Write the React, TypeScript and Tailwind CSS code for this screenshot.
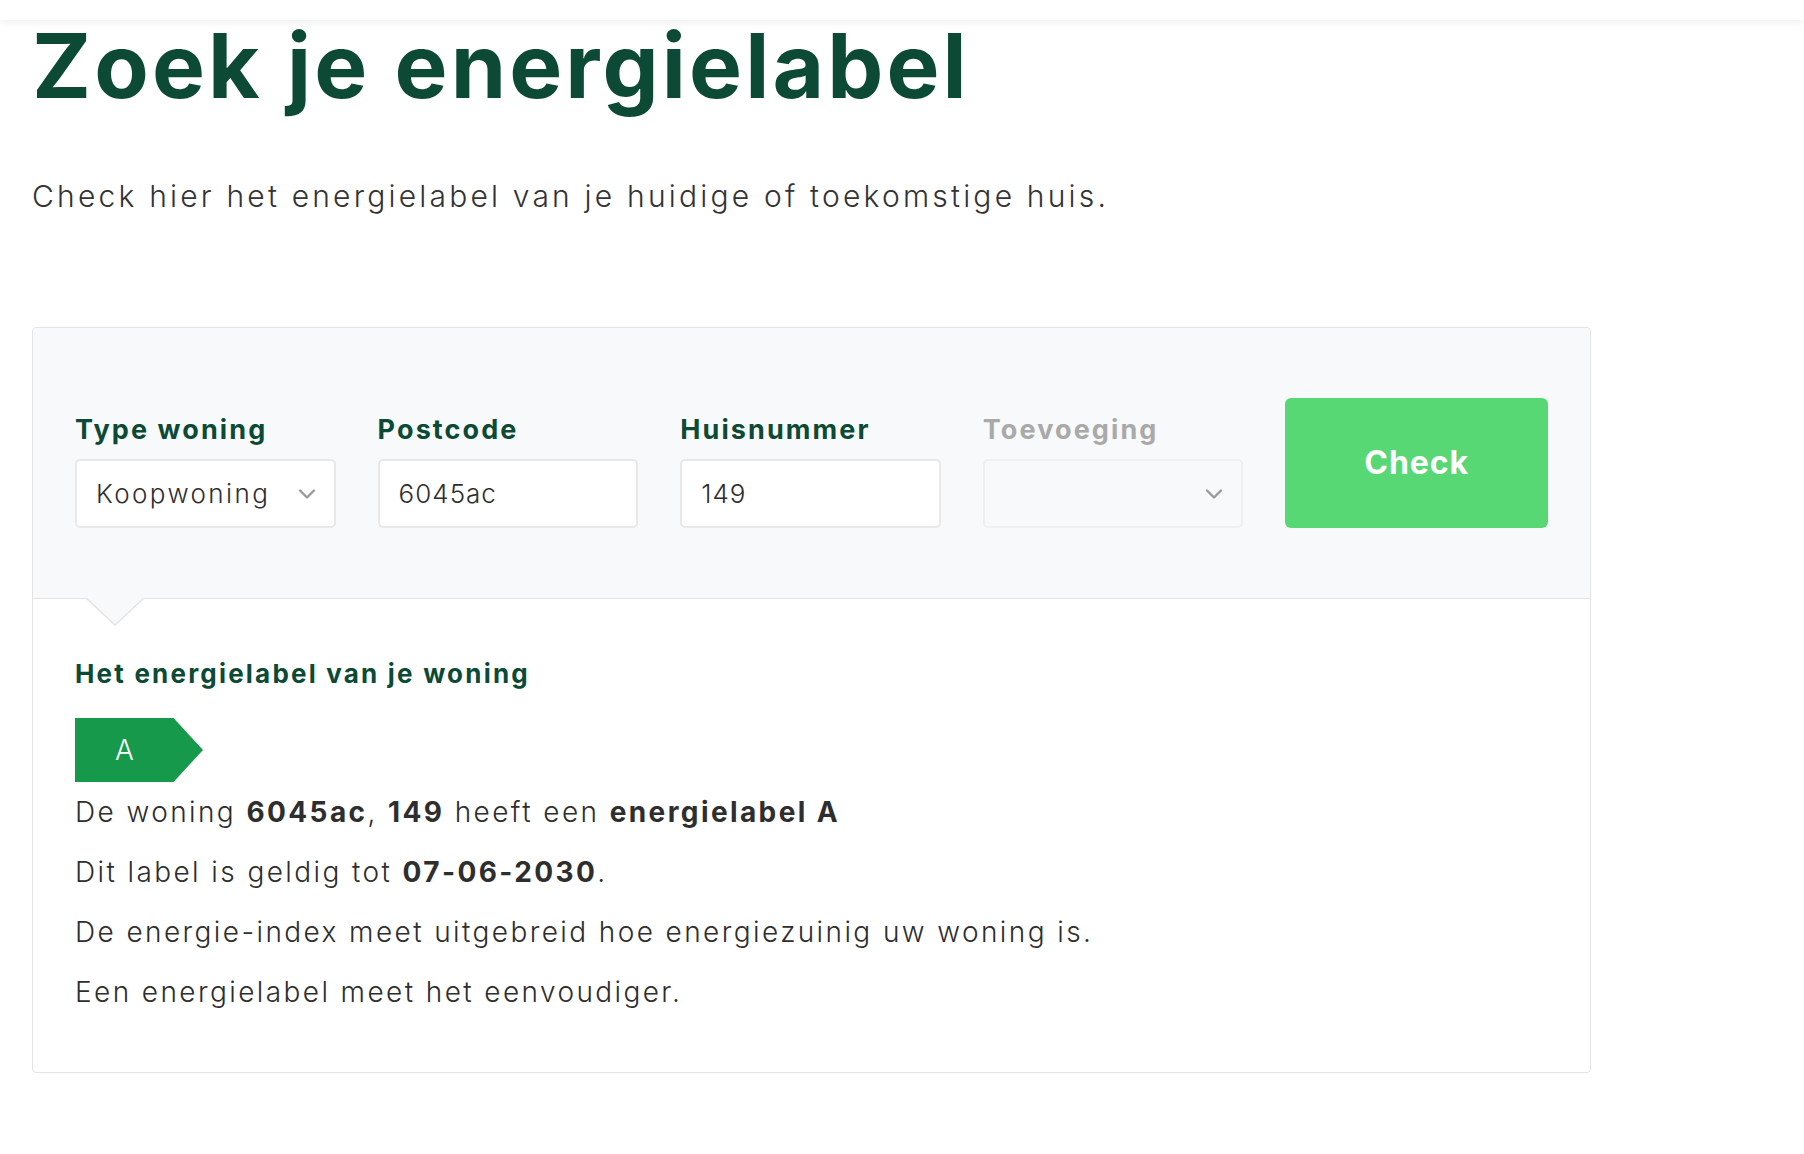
import React from "react";

function Chevron() {
  return (
    <svg width="18" height="10" viewBox="0 0 18 10" fill="none" className="shrink-0">
      <path d="M2 1.5l7 7 7-7" stroke="#9a9a9a" strokeWidth="2.4" strokeLinecap="round" strokeLinejoin="round" />
    </svg>
  );
}

interface FieldProps {
  label: string;
  disabled?: boolean;
  children: React.ReactNode;
}

function Field({ label, disabled, children }: FieldProps) {
  return (
    <div className="flex w-[262px] flex-col">
      <span
        className={`mb-[16px] text-[27px] font-bold leading-none tracking-[2.1px] ${
          disabled ? "text-[#a9a9a9]" : "text-[#0c4a36]"
        }`}
      >
        {label}
      </span>
      {children}
    </div>
  );
}

export default function App() {
  return (
    <div className="min-h-screen bg-white font-['Inter',sans-serif] text-[#2e2e2e]">
      {/* top bar */}
      <div className="h-[20px] bg-white shadow-[0_2px_8px_rgba(0,0,0,0.07)]" />

      <div className="pl-[32px]">
        <h1 className="mt-[1px] text-[89px] font-bold leading-none tracking-[0.035em] text-[#0c4a36]">
          Zoek je energielabel
        </h1>
        <p className="mt-[71px] text-[30px] font-light leading-none tracking-[3.2px] text-[#333]">
          Check hier het energielabel van je huidige of toekomstige huis.
        </p>

        {/* search card */}
        <div className="relative mt-[116px] w-[1559px] rounded-[4px] border border-[#e4e4e4]">
          <div className="flex items-end gap-[42px] rounded-t-[4px] border-b border-[#e4e4e4] bg-[#f8f9fa] px-[42px] py-[70px]">
            <Field label="Type woning">
              <div className="flex h-[69px] items-center justify-between rounded-[5px] border-2 border-[#e8e8e8] bg-white pl-[19px] pr-[18px]">
                <span className="text-[26px] font-light tracking-[2.4px]">Koopwoning</span>
                <Chevron />
              </div>
            </Field>
            <Field label="Postcode">
              <div className="flex h-[69px] items-center rounded-[5px] border-2 border-[#e8e8e8] bg-white pl-[19px]">
                <span className="text-[26px] font-light tracking-[1px]">6045ac</span>
              </div>
            </Field>
            <Field label="Huisnummer">
              <div className="flex h-[69px] items-center rounded-[5px] border-2 border-[#e8e8e8] bg-white pl-[19px]">
                <span className="text-[26px] font-light tracking-[1px]">149</span>
              </div>
            </Field>
            <Field label="Toevoeging" disabled>
              <div className="flex h-[69px] items-center justify-end rounded-[5px] border-2 border-[#efefef] bg-[#f8f9fa] pr-[18px]">
                <Chevron />
              </div>
            </Field>
            <button className="flex h-[130px] w-[264px] items-center justify-center rounded-[6px] bg-[#58d775] text-[32px] font-bold tracking-[0.03em] text-white">
              Check
            </button>
          </div>

          {/* pointer */}
          <svg
            width="58"
            height="28"
            viewBox="0 0 58 28"
            className="absolute left-[53px] top-[270px]"
          >
            <polygon points="0,0 29,27 58,0" fill="#f8f9fa" />
            <polyline points="0,0 29,27 58,0" fill="none" stroke="#e4e4e4" strokeWidth="1.5" />
          </svg>

          {/* result */}
          <div className="px-[42px] pb-[50px] pt-[60px]">
            <h2 className="text-[26px] font-bold leading-[30px] tracking-[2.2px] text-[#0c4a36]">
              Het energielabel van je woning
            </h2>
            <div className="mt-[29px] flex h-[64px] w-[128px] items-center bg-[#17994b] [clip-path:polygon(0_0,77%_0,100%_50%,77%_100%,0_100%)]">
              <span className="w-[99px] text-center text-[28px] font-light text-white">A</span>
            </div>
            <div className="text-[28px] font-light leading-[60px] tracking-[2.4px] text-[#2e2e2e]">
              <p>
                De woning <b className="font-bold">6045ac</b>, <b className="font-bold">149</b> heeft een{" "}
                <b className="font-bold">energielabel A</b>
              </p>
              <p>
                Dit label is geldig tot <b className="font-bold">07-06-2030</b>.
              </p>
              <p>De energie-index meet uitgebreid hoe energiezuinig uw woning is.</p>
              <p>Een energielabel meet het eenvoudiger.</p>
            </div>
          </div>
        </div>
      </div>
    </div>
  );
}
